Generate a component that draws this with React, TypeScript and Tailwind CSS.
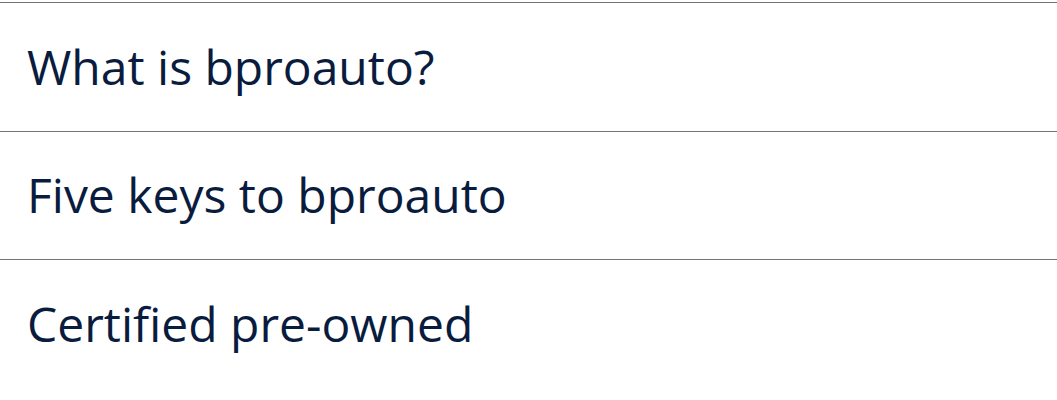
import React from "react";

const items = ["What is bproauto?", "Five keys to bproauto", "Certified pre-owned"];

export default function App() {
  return (
    <div className="w-[1057px] h-[400px] bg-white pt-[2px] overflow-hidden" style={{ fontFamily: '"Open Sans", sans-serif' }}>
      {items.map((label) => (
        <div
          key={label}
          className="h-[128.5px] border-t border-[#747474] flex items-center px-[27px] text-[48px] leading-none text-[#0a1c3e]"
        >
          {label}
        </div>
      ))}
    </div>
  );
}
